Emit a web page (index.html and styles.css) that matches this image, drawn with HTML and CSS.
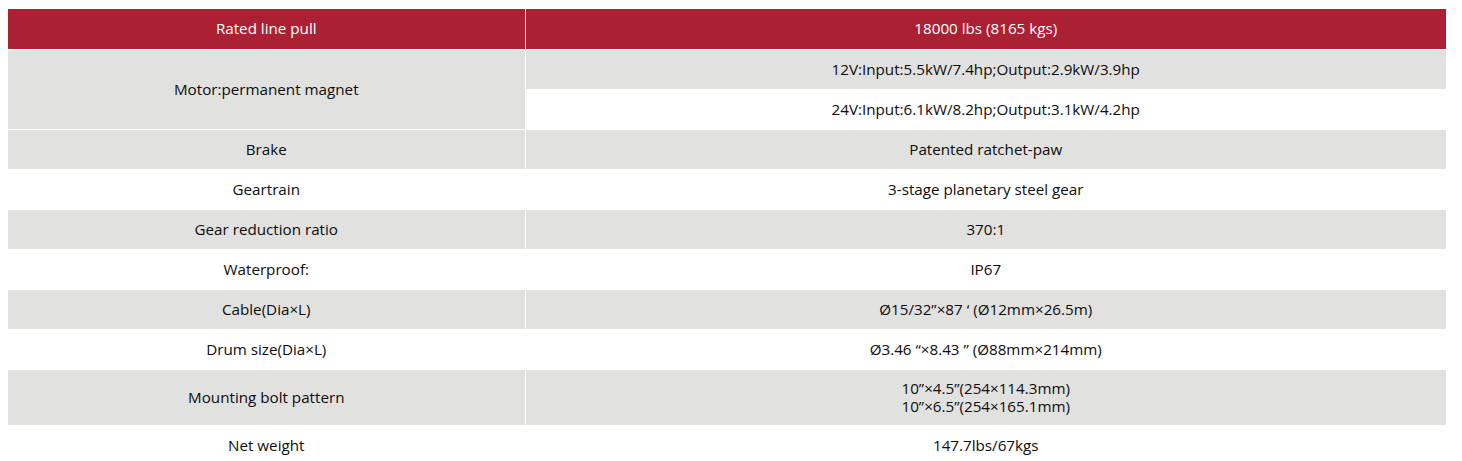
FILE: index.html
```html
<!DOCTYPE html>
<html lang="en">
<head>
<meta charset="utf-8">
<title>Specifications</title>
<link rel="stylesheet" href="styles.css">
</head>
<body>
<table class="spec">
  <colgroup><col class="c1"><col class="c2"></colgroup>
  <thead>
    <tr class="head"><th>Rated line pull</th><th>18000 lbs (8165 kgs)</th></tr>
  </thead>
  <tbody>
    <tr class="g"><td rowspan="2" class="g lead">Motor:permanent magnet</td><td>12V:Input:5.5kW/7.4hp;Output:2.9kW/3.9hp</td></tr>
    <tr class="w"><td>24V:Input:6.1kW/8.2hp;Output:3.1kW/4.2hp</td></tr>
    <tr class="g"><td class="lead">Brake</td><td>Patented ratchet-paw</td></tr>
    <tr class="w"><td class="lead">Geartrain</td><td>3-stage planetary steel gear</td></tr>
    <tr class="g"><td class="lead">Gear reduction ratio</td><td>370:1</td></tr>
    <tr class="w"><td class="lead">Waterproof:</td><td>IP67</td></tr>
    <tr class="g"><td class="lead">Cable(Dia×L)</td><td>Ø15/32”×87 ‘ (Ø12mm×26.5m)</td></tr>
    <tr class="w"><td class="lead">Drum size(Dia×L)</td><td>Ø3.46 “×8.43 ” (Ø88mm×214mm)</td></tr>
    <tr class="g"><td class="lead">Mounting bolt pattern</td><td>10”×4.5”(254×114.3mm)<br>10”×6.5”(254×165.1mm)</td></tr>
    <tr class="w"><td class="lead">Net weight</td><td>147.7lbs/67kgs</td></tr>
  </tbody>
</table>
</body>
</html>
```
FILE: styles.css
```css
html, body { background: #fff; }
body {
  margin: 9px 8px 8px 8px;
  font-family: "Open Sans", "Noto Sans", sans-serif;
  font-size: 15.2px;
  color: #0d0d0d;
}
.spec {
  width: 1438px;
  border-collapse: collapse;
  table-layout: fixed;
}
.c1 { width: 517px; }
.c2 { width: 921px; }
.spec th, .spec td {
  height: 40px;
  box-sizing: border-box;
  padding: 9px 10px 10px;
  line-height: 18px;
  text-align: center;
  vertical-align: middle;
  font-weight: normal;
  border-bottom: 1px solid #fff;
}
.spec th:first-child, .spec td.lead {
  border-right: 1px solid #fff;
}
.head th { background: #ab2133; color: #fff; }
tr.g td, td.g { background: #e1e1e0; }
tr.w td { background: #fff; }
```
